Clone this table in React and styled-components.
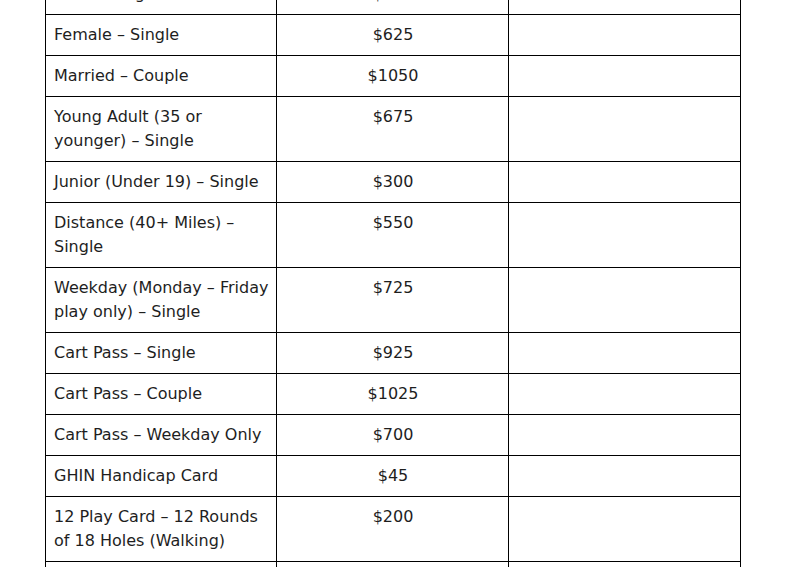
import React from "react";
import styled, { createGlobalStyle } from "styled-components";

const Global = createGlobalStyle`
  html, body { margin: 0; padding: 0; background: #fff; }
  body { font-family: "DejaVu Sans", "Liberation Sans", sans-serif; color: #222; }
`;

const Page = styled.div`
  padding-left: 45px;
  margin-top: -27px;
`;

const Table = styled.table`
  width: 695px;
  border-collapse: collapse;
  table-layout: fixed;
  font-size: 16px;
  line-height: 24px;
`;

const Col = styled.col`
  width: ${(p) => p.$w}px;
`;

const Cell = styled.td`
  border: 1px solid #000;
  padding: 8px 7px 8px 8px;
  vertical-align: top;
  text-align: ${(p) => (p.$center ? "center" : "left")};
  color: #1e1e1e;
`;

const rows = [
  ["Male – Single", "$850"],
  ["Female – Single", "$625"],
  ["Married – Couple", "$1050"],
  ["Young Adult (35 or younger) – Single", "$675"],
  ["Junior (Under 19) – Single", "$300"],
  ["Distance (40+ Miles) – Single", "$550"],
  ["Weekday (Monday – Friday play only) – Single", "$725"],
  ["Cart Pass – Single", "$925"],
  ["Cart Pass – Couple", "$1025"],
  ["Cart Pass – Weekday Only", "$700"],
  ["GHIN Handicap Card", "$45"],
  ["12 Play Card – 12 Rounds of 18 Holes (Walking)", "$200"],
  ["12 Play Card – 12 Rounds of 18 Holes (Riding)", "$350"],
];

export default function App() {
  return (
    <>
      <Global />
      <Page>
        <Table>
          <colgroup>
            <Col $w={231} />
            <Col $w={232} />
            <Col $w={232} />
          </colgroup>
          <tbody>
            {rows.map(([name, price]) => (
              <tr key={name}>
                <Cell>{name}</Cell>
                <Cell $center>{price}</Cell>
                <Cell />
              </tr>
            ))}
          </tbody>
        </Table>
      </Page>
    </>
  );
}
